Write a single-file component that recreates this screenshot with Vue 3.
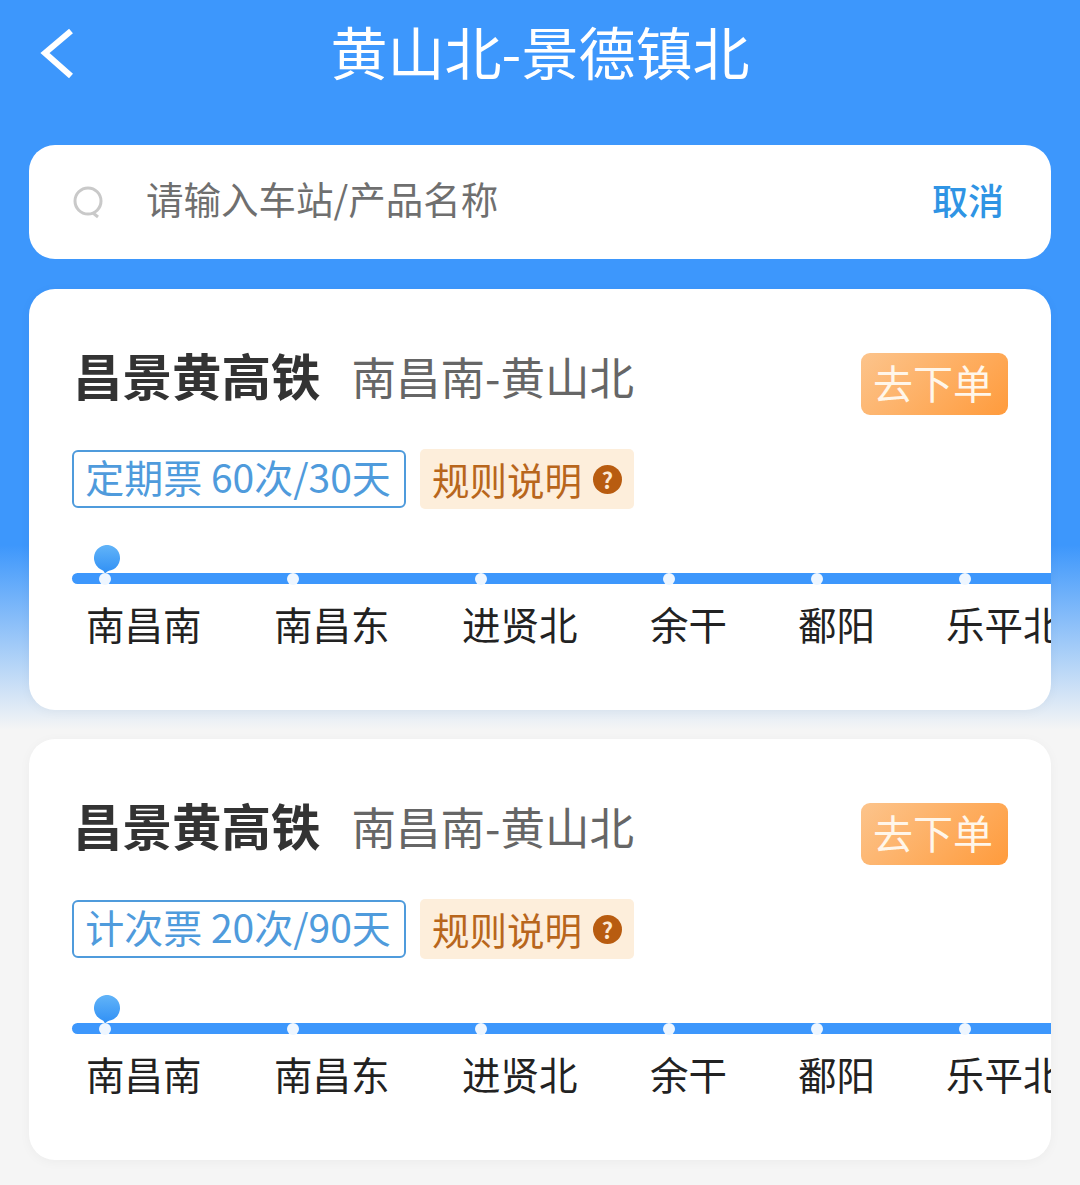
<script setup>
const stations = [
  { name: '南昌南', w: 188 },
  { name: '南昌东', w: 188 },
  { name: '进贤北', w: 188 },
  { name: '余干', w: 148 },
  { name: '鄱阳', w: 148 },
  { name: '乐平北', w: 188 },
]
const products = [
  { tag: '定期票 60次/30天' },
  { tag: '计次票 20次/90天' },
]
</script>

<template>
  <div class="page">
    <header class="top">
      <svg class="back" width="40" height="56" viewBox="0 0 40 56">
        <path d="M31 4 L5 26 L31 49" fill="none" stroke="#fff" stroke-width="6" />
      </svg>
      <h1 class="heading">黄山北-景德镇北</h1>
    </header>

    <div class="search">
      <svg class="search-icon" width="32" height="34" viewBox="0 0 32 34">
        <circle cx="15" cy="15" r="13" fill="none" stroke="#c9c9c9" stroke-width="3" />
        <path d="M20 27 L25 31" fill="none" stroke="#c9c9c9" stroke-width="3" />
      </svg>
      <span class="placeholder">请输入车站/产品名称</span>
      <span class="cancel">取消</span>
    </div>

    <section v-for="p in products" :key="p.tag" class="card">
      <div class="card-head">
        <div class="names">
          <span class="name">昌景黄高铁</span>
          <span class="route">南昌南-黄山北</span>
        </div>
        <span class="order">去下单</span>
      </div>
      <div class="tags">
        <span class="tag">{{ p.tag }}</span>
        <span class="rule">规则说明<i class="help">?</i></span>
      </div>
      <div class="stations">
        <div v-for="(s, i) in stations" :key="s.name" class="station" :style="{ width: s.w + 'px' }">
          <div class="seg" :class="{ first: i === 0 }">
            <svg v-if="i === 0" class="pin" width="28" height="30" viewBox="0 0 28 30">
              <defs>
                <linearGradient :id="'pin' + p.tag.charCodeAt(0)" x1="0" y1="0" x2="0" y2="1">
                  <stop offset="0" stop-color="#62b4f8" />
                  <stop offset="1" stop-color="#2f8ff5" />
                </linearGradient>
              </defs>
              <path
                d="M12 29 C11.5 26 9.5 25 7.5 24.2 A13 13 0 1 1 20.5 24.2 C17 25.5 13.5 26 12 29 Z"
                :fill="'url(#pin' + p.tag.charCodeAt(0) + ')'"
              />
            </svg>
            <span class="dot"></span>
          </div>
          <span class="label">{{ s.name }}</span>
        </div>
      </div>
    </section>
  </div>
</template>

<style>
body {
  background: #f5f5f5;
}
</style>

<style scoped>
.page {
  box-sizing: border-box;
  width: 1080px;
  height: 1185px;
  overflow: hidden;
  padding: 0 29px;
  background: linear-gradient(180deg, #3d97fc 0, #3d97fc 545px, #d3e4f6 695px, #f5f5f5 730px);
  font-family: "Noto Sans CJK SC", "Noto Sans", sans-serif;
}
.top {
  position: relative;
  height: 108px;
  margin-bottom: 37px;
  display: flex;
  align-items: center;
  justify-content: center;
}
.back {
  position: absolute;
  left: 11px;
  top: 27px;
}
.heading {
  margin: 0;
  font-size: 57px;
  font-weight: 400;
  line-height: 100px;
  height: 108px;
  color: #fff;
}
.search {
  box-sizing: border-box;
  height: 114px;
  margin-bottom: 30px;
  padding: 0 47px 0 44px;
  display: flex;
  align-items: center;
  background: #fff;
  border-radius: 26px;
}
.search-icon {
  flex: none;
  margin-right: 41px;
  margin-top: 2px;
}
.placeholder {
  flex: 1;
  font-size: 37.5px;
  line-height: 106px;
  height: 114px;
  color: #6f6f6f;
}
.cancel {
  font-size: 36px;
  font-weight: 500;
  line-height: 108px;
  height: 114px;
  color: #2f94e4;
}
.card {
  box-sizing: border-box;
  height: 421px;
  margin-bottom: 29px;
  padding: 58px 0 0 43px;
  background: #fff;
  border-radius: 26px;
  overflow: hidden;
  box-shadow: 0 2px 12px rgba(0, 0, 0, 0.04);
}
.card-head {
  display: flex;
  justify-content: space-between;
  align-items: flex-start;
  padding-right: 43px;
}
.names {
  display: flex;
  align-items: flex-start;
  height: 60px;
}
.name {
  font-size: 49.5px;
  font-weight: 700;
  line-height: 56px;
  color: #333;
  margin: 0 31px 0 1px;
}
.route {
  font-size: 44.5px;
  line-height: 58px;
  color: #666;
}
.order {
  width: 147px;
  height: 62px;
  margin-top: 6px;
  border-radius: 9px;
  background: linear-gradient(135deg, #fcc48c, #ff9b3c);
  color: #fff6ea;
  font-size: 40px;
  line-height: 58px;
  text-align: center;
  text-indent: -3px;
}
.tags {
  display: flex;
  align-items: center;
  gap: 14px;
  margin-top: 34px;
  height: 60px;
}
.tag {
  box-sizing: border-box;
  width: 334px;
  height: 58px;
  padding-right: 2px;
  border: 2.5px solid #4f9bdc;
  border-radius: 6px;
  text-align: center;
  font-size: 39px;
  line-height: 48px;
  color: #4f9bdc;
  white-space: nowrap;
}
.rule {
  box-sizing: border-box;
  width: 214px;
  height: 60px;
  padding-left: 12px;
  display: flex;
  align-items: center;
  background: #fdeedb;
  border-radius: 5px;
  font-size: 37.5px;
  line-height: 54px;
  color: #b8661c;
}
.help {
  width: 29px;
  height: 29px;
  margin-left: 11px;
  border-radius: 50%;
  background: #b85c10;
  color: #fde9d3;
  font-style: normal;
  font-size: 22px;
  font-weight: 700;
  line-height: 29px;
  text-align: center;
}
.stations {
  display: flex;
  margin-top: 64px;
  width: 1100px;
}
.station {
  flex: none;
}
.seg {
  position: relative;
  height: 11px;
  background: #3d97fc;
}
.seg.first {
  border-radius: 6px 0 0 6px;
}
.dot {
  position: absolute;
  left: 27px;
  top: -0.5px;
  width: 12px;
  height: 12px;
  border-radius: 50%;
  background: #eef6ff;
}
.pin {
  position: absolute;
  left: 21px;
  top: -28px;
}
.label {
  display: block;
  margin: 14px 0 0 14px;
  font-size: 38.5px;
  line-height: 50px;
  color: #222;
  white-space: nowrap;
}
</style>
